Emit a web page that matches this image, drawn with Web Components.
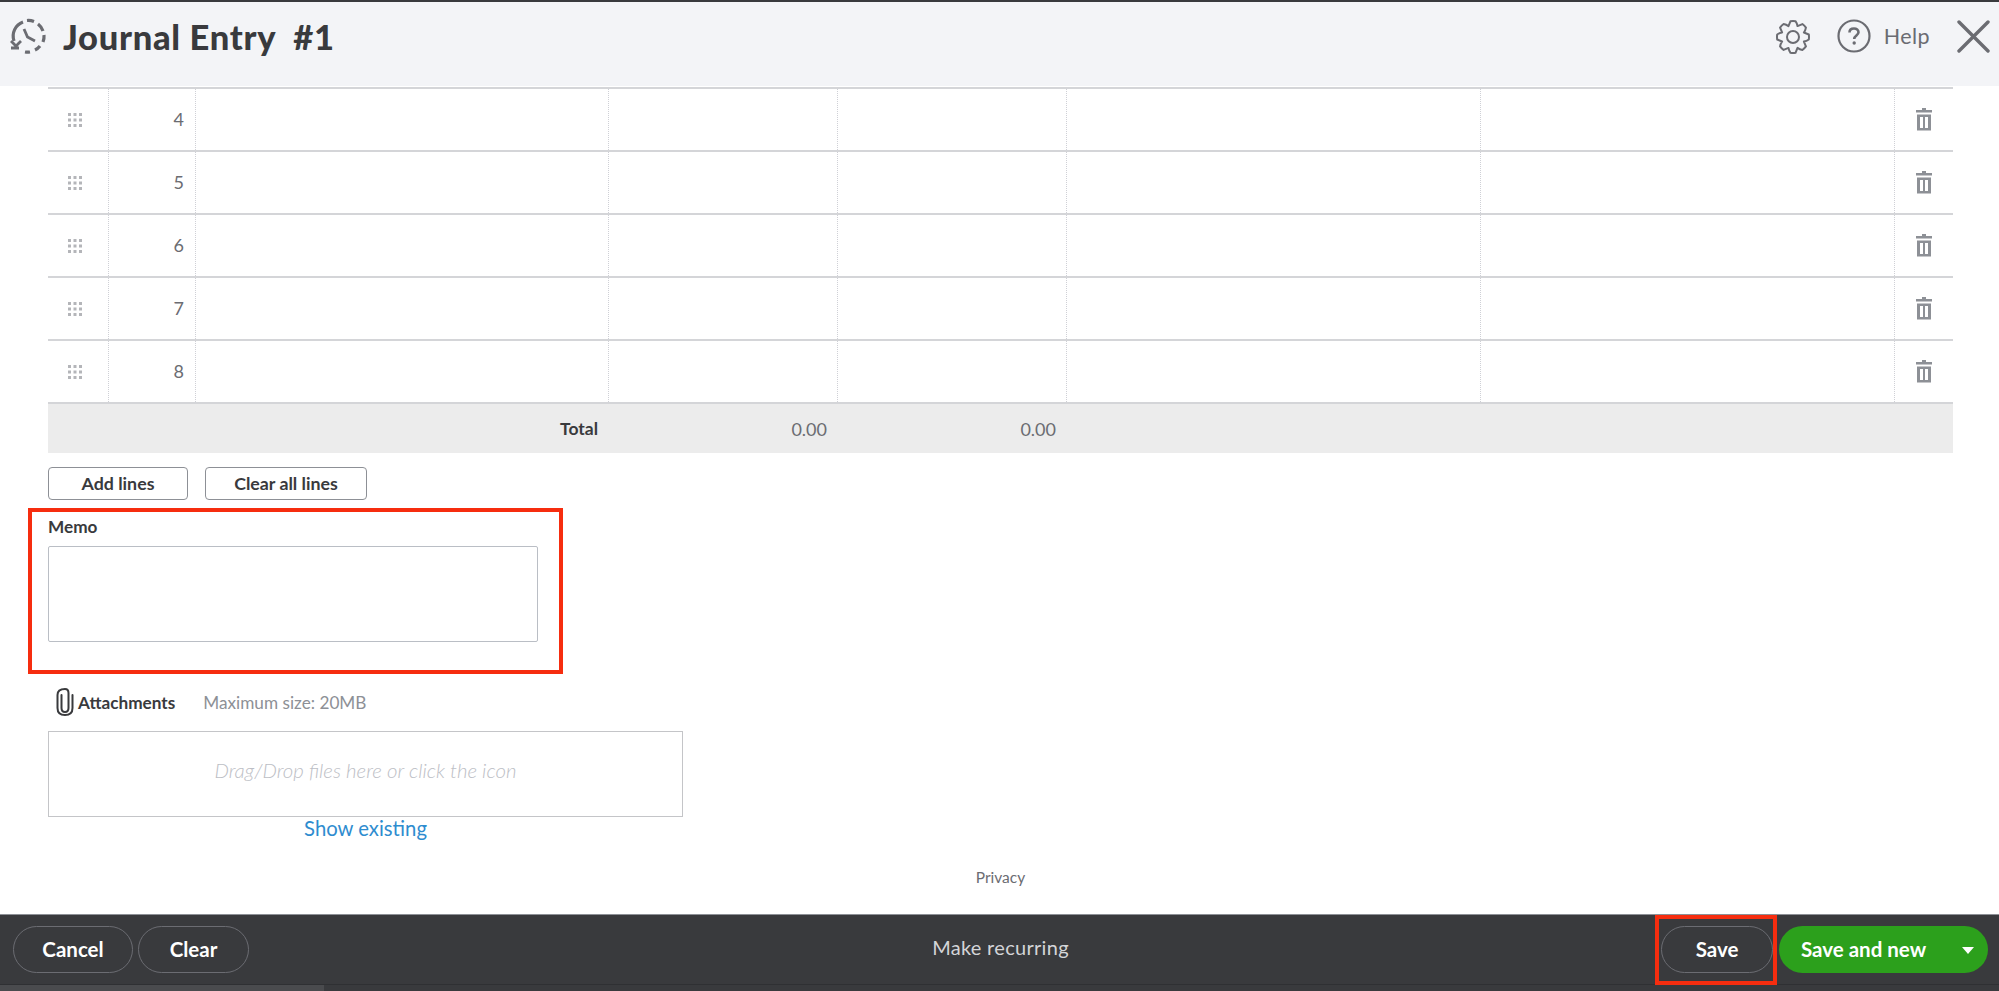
<!DOCTYPE html>
<html>
<head>
<meta charset="utf-8">
<title>Journal Entry</title>
<style>
html, body { margin: 0; height: 100%; }
body {
  display: flex;
  flex-direction: column;
  height: 991px;
  overflow: hidden;
  background: #fff;
  font-family: 'Lato', 'Liberation Sans', sans-serif;
  color: #393a3d;
}
main {
  flex: 1;
  display: flex;
  flex-direction: column;
  padding: 0 46px 0 48px;
  min-height: 0;
}
</style>
</head>
<body>
<je-header title="Journal Entry  #1"></je-header>
<main>
  <je-table>
    <je-row num="4"></je-row>
    <je-row num="5"></je-row>
    <je-row num="6"></je-row>
    <je-row num="7"></je-row>
    <je-row num="8"></je-row>
    <je-total></je-total>
  </je-table>
  <je-line-actions></je-line-actions>
  <je-memo></je-memo>
  <je-attachments></je-attachments>
  <je-privacy></je-privacy>
</main>
<je-footer></je-footer>

<script>
const COLUMNS = '61px 87px 413px 229px 229px 414px 414px 1fr';

function gearPath(cx, cy, outer, inner, teeth) {
  let d = '';
  const step = (Math.PI * 2) / teeth;
  for (let i = 0; i < teeth; i++) {
    const a = i * step - Math.PI / 2;
    const pts = [
      [inner, a - step * 0.5],
      [outer, a - step * 0.2],
      [outer, a + step * 0.2],
    ];
    pts.forEach((p, j) => {
      const x = (cx + p[0] * Math.cos(p[1])).toFixed(2);
      const y = (cy + p[0] * Math.sin(p[1])).toFixed(2);
      if (i === 0 && j === 0) d += `M${x} ${y}`;
      else if (j === 0) d += `A${inner} ${inner} 0 0 1 ${x} ${y}`;
      else if (j === 1) d += `L${x} ${y}`;
      else d += `A${outer} ${outer} 0 0 1 ${x} ${y}`;
    });
  }
  const a0 = -step * 0.5 - Math.PI / 2;
  d += `A${inner} ${inner} 0 0 1 ${(cx + inner * Math.cos(a0)).toFixed(2)} ${(cy + inner * Math.sin(a0)).toFixed(2)}Z`;
  return d;
}

class JeHeader extends HTMLElement {
  connectedCallback() {
    const root = this.attachShadow({ mode: 'open' });
    root.innerHTML = `
      <style>
        :host {
          display: flex;
          align-items: center;
          padding: 0 9px 16px 10px;
          border-top: 2px solid #393a3d;
          background: #f3f4f7;
          flex: none;
          box-sizing: content-box;
          height: 68px;
        }
        h1 {
          margin: 0 0 0 17px;
          font-size: 34.500px;
          font-weight: 900;
          color: #393a3d;
          white-space: pre;
          letter-spacing: 0.7px;
          flex: 1;
        }
        svg { display: block; flex: none; }
        .help { margin-left: 27px; }
        span { margin-left: 13px; font-size: 21.500px; color: #6b6c72; letter-spacing: 0.4px; }
        .close { margin-left: 27px; }
        .gear { margin-top: 1px; }
      </style>
      <svg width="36" height="36" viewBox="0 0 36 36" fill="none" stroke="#6b6c72" stroke-width="3.2">
        <path d="M4 23 A15 15 0 0 1 13 4"/>
        <path d="M17 2.500 A15.500 15.500 0 0 1 24 3.500" />
        <path d="M28 6 A15 15 0 0 1 33 13" />
        <path d="M34 17 A15 15 0 0 1 33 24" />
        <path d="M30 28 A15 15 0 0 1 25 32" />
        <path d="M20 34 A15 15 0 0 1 15 34" />
        <path d="M14 11 L17.500 19 L25 23" stroke-width="2.800"/>
        <path d="M1 23 L6 28 L11 23 M1 30 L9 30" stroke-width="2.800"/>
      </svg>
      <h1>${this.getAttribute('title')}</h1>
      <svg class="gear" width="34" height="34" viewBox="0 0 34 34" fill="none" stroke="#6b6c72" stroke-width="2" stroke-linejoin="round">
        <path d="${gearPath(17, 17, 16, 11.8, 8)}"/>
        <circle cx="17" cy="17" r="6"/>
      </svg>
      <svg class="help" width="34" height="34" viewBox="0 0 34 34" fill="none" stroke="#6b6c72" stroke-width="2.200">
        <circle cx="17" cy="17" r="15.500"/>
        <path d="M12.500 13.500 C12.500 10.500 15 9.500 17 9.500 C19.500 9.500 21.500 11 21.500 13.300 C21.500 16.500 17.200 16.500 17.200 20" stroke-width="2.600"/>
        <circle cx="17.200" cy="24" r="1.700" fill="#6b6c72" stroke="none"/>
      </svg>
      <span>Help</span>
      <svg class="close" width="33" height="33" viewBox="0 0 33 33" fill="none" stroke="#6b6c72" stroke-width="3.400" stroke-linecap="round">
        <path d="M2 2 L31 31 M31 2 L2 31"/>
      </svg>
    `;
  }
}

class JeTable extends HTMLElement {
  connectedCallback() {
    this.attachShadow({ mode: 'open' }).innerHTML = `
      <style>:host { display: block; flex: none; margin-top: 1px; }</style>
      <slot></slot>
    `;
  }
}

class JeRow extends HTMLElement {
  connectedCallback() {
    const cells = Array(5).fill('<div class="cell"></div>').join('');
    this.attachShadow({ mode: 'open' }).innerHTML = `
      <style>
        :host {
          display: grid;
          grid-template-columns: ${COLUMNS};
          height: 63px;
          box-sizing: border-box;
          border-top: 2px solid #d4d5d8;
          color: #6b6c72;
          font-size: 18px;
        }
        .cell { border-right: 1px dotted #cfd0d6; }
        .grip, .num, .trash { display: flex; align-items: center; }
        .grip { justify-content: center; padding-right: 6px; border-right: 1px dotted #cfd0d6; }
        .num { justify-content: flex-end; padding: 0 11px 2px 0; border-right: 1px dotted #cfd0d6; }
        .trash { justify-content: center; padding: 0 1px 0 0; }
        svg { display: block; }
      </style>
      <div class="grip">
        <svg width="14" height="14" viewBox="0 0 14 14" fill="#b4b5b9">
          ${[0, 5.5, 11].map(y => [0, 5.5, 11].map(x => `<rect x="${x}" y="${y}" width="3" height="3"/>`).join('')).join('')}
        </svg>
      </div>
      <div class="num">${this.getAttribute('num')}</div>
      ${cells}
      <div class="trash">
        <svg width="16" height="23" viewBox="0 0 16 23">
          <rect x="6" y="0" width="4" height="2" fill="#8d9096"/>
          <rect x="0" y="2" width="16" height="2.500" fill="#8d9096"/>
          <path d="M1 6.500H15V22.500H1Z M4 9V20H7V9Z M9 9V20H12V9Z" fill="#8d9096" fill-rule="evenodd"/>
        </svg>
      </div>
    `;
  }
}

class JeTotal extends HTMLElement {
  connectedCallback() {
    this.attachShadow({ mode: 'open' }).innerHTML = `
      <style>
        :host {
          display: grid;
          grid-template-columns: ${COLUMNS};
          align-items: center;
          height: 51px;
          box-sizing: border-box;
          border-top: 2px solid #d4d5d8;
          background: #ececec;
          color: #393a3d;
        }
        b { grid-column: 1 / 4; text-align: right; padding-right: 11px; font-weight: 700; font-size: 17.500px; }
        span { text-align: right; padding-right: 11px; color: #6b6c72; font-size: 18px; }
      </style>
      <b>Total</b><span>0.00</span><span>0.00</span>
    `;
  }
}

class JeButton extends HTMLElement {
  connectedCallback() {
    this.attachShadow({ mode: 'open' }).innerHTML = `
      <style>
        :host {
          display: inline-flex;
          align-items: center;
          justify-content: center;
          box-sizing: border-box;
          height: 33px;
          padding-bottom: 2px;
          border: 1px solid #8d9096;
          border-radius: 4px;
          background: #fff;
          color: #393a3d;
          font-size: 17.800px;
          font-weight: 700;
        }
      </style>
      <slot></slot>
    `;
  }
}

class JeLineActions extends HTMLElement {
  connectedCallback() {
    this.attachShadow({ mode: 'open' }).innerHTML = `
      <style>
        :host { display: flex; gap: 17px; margin-top: 14px; flex: none; }
        .add { width: 140px; }
        .clear { width: 162px; }
      </style>
      <je-button class="add">Add lines</je-button>
      <je-button class="clear">Clear all lines</je-button>
    `;
  }
}

class JeMemo extends HTMLElement {
  connectedCallback() {
    this.attachShadow({ mode: 'open' }).innerHTML = `
      <style>
        :host { display: block; position: relative; margin-top: 10px; width: 490px; flex: none; }
        label { display: block; font-size: 17.200px; font-weight: 700; color: #393a3d; line-height: 20px; margin-bottom: 9px; padding-top: 7px; }
        .box { height: 96px; box-sizing: border-box; border: 1px solid #babec5; border-radius: 2px; background: #fff; }
        .mark { position: absolute; left: -20px; top: -2px; width: 535px; height: 166px; box-sizing: border-box; border: 4px solid #f62d0f; }
      </style>
      <label>Memo</label>
      <div class="box"></div>
      <div class="mark"></div>
    `;
  }
}

class JeAttachments extends HTMLElement {
  connectedCallback() {
    this.attachShadow({ mode: 'open' }).innerHTML = `
      <style>
        :host { display: block; width: 635px; margin-top: 46px; flex: none; }
        .head { display: flex; align-items: center; height: 28px; padding-left: 8px; }
        svg { display: block; flex: none; }
        b { margin-left: 4px; font-size: 17.200px; font-weight: 700; color: #393a3d; }
        .max { margin-left: 28px; font-size: 17.200px; color: #8d9096; }
        .drop {
          display: flex;
          align-items: center;
          justify-content: center;
          height: 86px;
          margin-top: 15px;
          padding-bottom: 8px;
          box-sizing: border-box;
          border: 1px solid #c4c5c8;
          color: #bcbec5;
          font-size: 20.400px;
          font-style: italic;
          font-weight: 300;
        }
        a { display: block; text-align: center; color: #2e8ccf; font-size: 20.300px; line-height: 23px; }
      </style>
      <div class="head">
        <svg width="18" height="28" viewBox="0 0 18 28" fill="none" stroke="#393a3d" stroke-width="2" stroke-linecap="round">
          <path d="M5.500 7 V20 C5.500 23 7 24 9 24 C11 24 12.500 23 12.500 20 V5 C12.500 2.500 11 1 9 1 C4 1 1.500 3 1.500 7 V20 C1.500 25 4.500 27 9 27 C13.500 27 16.500 25 16.500 20 V7"/>
        </svg>
        <b>Attachments</b>
        <span class="max">Maximum size: 20MB</span>
      </div>
      <div class="drop">Drag/Drop files here or click the icon</div>
      <a>Show existing</a>
    `;
  }
}

class JePrivacy extends HTMLElement {
  connectedCallback() {
    this.attachShadow({ mode: 'open' }).innerHTML = `
      <style>
        :host { display: block; text-align: center; margin-top: 28px; font-size: 15.500px; color: #6b6c72; line-height: 18px; flex: none; }
      </style>
      Privacy
    `;
  }
}

class JePill extends HTMLElement {
  connectedCallback() {
    this.attachShadow({ mode: 'open' }).innerHTML = `
      <style>
        :host {
          display: inline-flex;
          align-items: center;
          justify-content: center;
          box-sizing: border-box;
          height: 47px;
          padding-bottom: 2px;
          border: 1px solid #6b6c72;
          border-radius: 24px;
          color: #fff;
          font-size: 20.500px;
          font-weight: 700;
          position: relative;
        }
        :host([primary]) { border: 0; background: #2ca01c; justify-content: flex-start; padding-left: 22px; }
      </style>
      <slot></slot>
    `;
  }
}

class JeFooter extends HTMLElement {
  connectedCallback() {
    this.attachShadow({ mode: 'open' }).innerHTML = `
      <style>
        :host {
          display: block;
          flex: none;
          height: 77px;
          background: #393a3d;
          border-top: 1px solid #8d9096;
          box-sizing: border-box;
          position: relative;
        }
        .bar {
          display: grid;
          grid-template-columns: 1fr auto 1fr;
          align-items: center;
          height: 70px;
          padding: 0 11px 0 13px;
          box-sizing: border-box;
          border-bottom: 1px solid #2f3033;
        }
        .left { display: flex; gap: 5px; }
        .right { display: flex; gap: 6px; justify-content: flex-end; position: relative; }
        .cancel { width: 120px; }
        .clear { width: 111px; }
        .save { width: 112px; }
        .new { width: 209px; }
        .mid { color: #d4d5d8; font-size: 20px; letter-spacing: 0.3px; padding-bottom: 5px; }
        .caret {
          position: absolute;
          right: 14px;
          top: 21px;
          width: 0;
          height: 0;
          border-left: 6px solid transparent;
          border-right: 6px solid transparent;
          border-top: 7px solid #fff;
        }
        .mark {
          position: absolute;
          left: 1655px;
          top: 0;
          width: 122px;
          height: 70px;
          box-sizing: border-box;
          border: 4px solid #f62d0f;
        }
        .scroll { height: 6px; width: 324px; background: #4a4b4e; }
      </style>
      <div class="bar">
        <div class="left">
          <je-pill class="cancel">Cancel</je-pill>
          <je-pill class="clear">Clear</je-pill>
        </div>
        <div class="mid">Make recurring</div>
        <div class="right">
          <je-pill class="save">Save</je-pill>
          <je-pill class="new" primary>Save and new</je-pill>
          <i class="caret"></i>
        </div>
      </div>
      <div class="scroll"></div>
      <div class="mark"></div>
    `;
  }
}

customElements.define('je-header', JeHeader);
customElements.define('je-table', JeTable);
customElements.define('je-row', JeRow);
customElements.define('je-total', JeTotal);
customElements.define('je-button', JeButton);
customElements.define('je-line-actions', JeLineActions);
customElements.define('je-memo', JeMemo);
customElements.define('je-attachments', JeAttachments);
customElements.define('je-privacy', JePrivacy);
customElements.define('je-pill', JePill);
customElements.define('je-footer', JeFooter);
</script>
</body>
</html>
